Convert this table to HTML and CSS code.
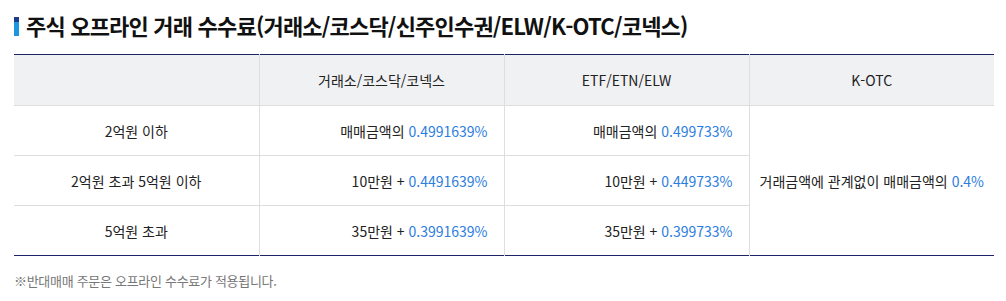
FILE: index.html
```html
<!DOCTYPE html>
<html lang="ko">
<head>
<meta charset="utf-8">
<link rel="stylesheet" href="styles.css">
</head>
<body>
<div class="wrap">
  <h2 class="title"><span class="bar"></span>주식 오프라인 거래 수수료(거래소/코스닥/신주인수권/ELW/K-OTC/코넥스)</h2>
  <table class="fee">
    <thead>
      <tr>
        <th></th>
        <th>거래소/코스닥/코넥스</th>
        <th>ETF/ETN/ELW</th>
        <th>K-OTC</th>
      </tr>
    </thead>
    <tbody>
      <tr>
        <td class="c">2억원 이하</td>
        <td class="r">매매금액의 <span class="b">0.4991639%</span></td>
        <td class="r">매매금액의 <span class="b">0.499733%</span></td>
        <td class="c wide" rowspan="3">거래금액에 관계없이 매매금액의 <span class="b">0.4%</span></td>
      </tr>
      <tr>
        <td class="c">2억원 초과 5억원 이하</td>
        <td class="r">10만원 + <span class="b">0.4491639%</span></td>
        <td class="r">10만원 + <span class="b">0.449733%</span></td>
      </tr>
      <tr>
        <td class="c">5억원 초과</td>
        <td class="r">35만원 + <span class="b">0.3991639%</span></td>
        <td class="r">35만원 + <span class="b">0.399733%</span></td>
      </tr>
    </tbody>
  </table>
  <p class="note">※반대매매 주문은 오프라인 수수료가 적용됩니다.</p>
</div>
</body>
</html>
```
FILE: styles.css
```css
html, body {
  margin: 0;
  padding: 0;
  background: #fff;
}
body {
  font-family: "Noto Sans CJK KR", "Noto Sans", sans-serif;
  color: #222;
}
.wrap {
  padding: 0 12px 0 14px;
}
.title {
  display: flex;
  align-items: center;
  margin: 0;
  height: 50px;
  font-size: 22px;
  font-weight: 700;
  color: #111;
  letter-spacing: -0.8px;
}
.bar {
  width: 5px;
  height: 19px;
  margin-right: 7px;
  margin-top: 2px;
  background: linear-gradient(to bottom, #1b3b8c 0, #1b3b8c 5px, #1d96e0 5px, #1d96e0 100%);
  flex: none;
}
.fee {
  width: 980px;
  border-collapse: collapse;
  table-layout: fixed;
  margin-top: 4px;
  border-top: 1px solid #1c2466;
  border-bottom: 1px solid #1c2466;
  font-size: 14px;
}
.fee th, .fee td {
  height: 49px;
  padding: 0 16px;
  border-left: 1px solid #dedede;
  border-bottom: 1px solid #dedede;
  vertical-align: middle;
  line-height: 20px;
}
.fee th {
  height: 50px;
  background: #f0f1f3;
  font-weight: 400;
  color: #222;
  text-align: center;
}
.fee tr > :first-child {
  border-left: none;
}
.fee tbody tr:last-child td,
.fee .wide {
  border-bottom: none;
}
.fee .wide {
  padding: 0 4px;
  white-space: nowrap;
}
.c { text-align: center; }
.r { text-align: right; }
.b { color: #2b7de0; }
.note {
  margin: 15px 0 0;
  font-size: 13px;
  color: #777;
  letter-spacing: -0.3px;
}
```
